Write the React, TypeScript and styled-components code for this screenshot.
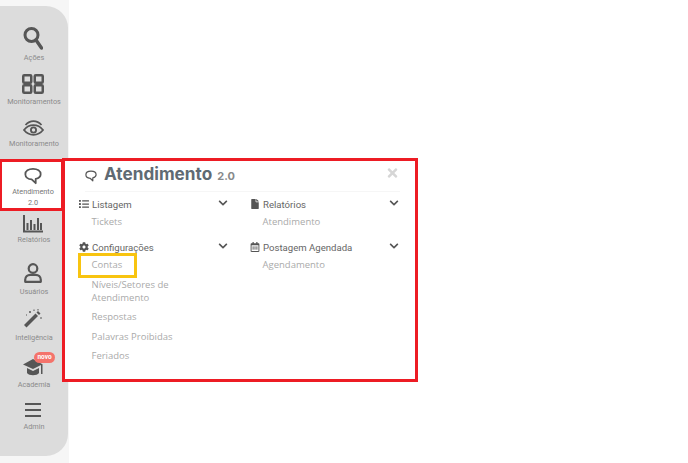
import React from "react";
import styled, {createGlobalStyle} from "styled-components";
import {FaChevronDown, FaCog, FaFile, FaList, FaRegCalendarAlt, FaTimes} from "react-icons/fa";

const GlobalStyle = createGlobalStyle`
  html, body {
    margin: 0;
    padding: 0;
    background: #fff;
    font-family: "Open Sans", "Liberation Sans", sans-serif;
  }
`

const Page = styled.div`
  position: relative;
  width: 688px;
  height: 463px;
  overflow: hidden;
`

const Rail = styled.div`
  width: 69px;
  height: 463px;
  padding-top: 6px;
  box-sizing: border-box;
  background: #f6f6f6;
`

const Sidebar = styled.nav`
  width: 68px;
  height: 450px;
  padding-top: 18px;
  box-sizing: border-box;
  background: #dcdcdc;
  border-radius: 0 22px 22px 0;
  display: flex;
  flex-direction: column;
`

const NavItem = styled.div<{$h: number; $active?: boolean}>`
  position: relative;
  height: ${p => p.$h}px;
  width: ${p => (p.$active ? "64px" : "68px")};
  box-sizing: border-box;
  display: flex;
  flex-direction: column;
  align-items: center;
  color: #8b8b8b;
  ${p => p.$active && `
    background: #fff;
    border: 3px solid #ed1c24;
    border-left-width: 2px;
    padding: 5px 0 0 3px;
    color: #777;
  `}
`

const NavIcon = styled.svg<{$top?: number}>`
  display: block;
  flex: none;
  margin-top: ${p => p.$top ?? 0}px;
  margin-right: 2px;
  color: #565656;
`

const NavLabel = styled.span<{$top?: number}>`
  margin-top: ${p => p.$top ?? 2}px;
  font-family: Roboto, "Liberation Sans", sans-serif;
  font-size: 7.3px;
  line-height: 11px;
  text-align: center;
  white-space: nowrap;
`

const NewBadge = styled.span`
  position: absolute;
  top: -2px;
  left: 34px;
  width: 21px;
  height: 11px;
  border-radius: 6px;
  background: #f4736b;
  color: #fff;
  font-family: Roboto, "Liberation Sans", sans-serif;
  font-size: 6.5px;
  font-weight: 700;
  line-height: 10px;
  text-align: center;
`

const Panel = styled.section`
  position: absolute;
  left: 62px;
  top: 158px;
  width: 356px;
  height: 224px;
  box-sizing: border-box;
  border: 3px solid #ed1c24;
  background: #fff;
  padding: 0 15px 0 14px;
`

const TitleRow = styled.header`
  display: flex;
  align-items: center;
  height: 31px;
  box-sizing: border-box;
  padding-bottom: 4px;
  margin-left: 6px;
  border-bottom: 1px solid #f6f6f6;
  color: #5f6a73;
`

const TitleIcon = styled.span`
  display: block;
  margin-top: 4px;
  margin-right: 7px;
  height: 12px;
`

const Title = styled.h1`
  margin: 0;
  font-family: Inter, "Liberation Sans", sans-serif;
  font-size: 17.2px;
  font-weight: 700;
  line-height: 24px;
`

const Version = styled.span`
  margin: 3px 0 0 5px;
  font-family: Inter, "Liberation Sans", sans-serif;
  font-size: 11px;
  font-weight: 700;
  color: #87898b;
`

const CloseIcon = styled(FaTimes)`
  position: absolute;
  top: 5px;
  right: 16px;
  width: 13px;
  height: 14px;
  color: #d6d6d6;
`

const Columns = styled.div`
  display: grid;
  grid-template-columns: 150px 150px;
  column-gap: 21px;
  padding-top: 4px;
`

const Column = styled.div`
  display: flex;
  flex-direction: column;
`

const Section = styled.div`
  margin-bottom: 7.5px;
`

const SectionHead = styled.div`
  display: flex;
  align-items: center;
  height: 16px;
  color: #666;
  font-family: Roboto, "Liberation Sans", sans-serif;
  font-size: 9.6px;

  svg:first-child {
    width: 10px;
    height: 10px;
    margin-right: 3px;
    color: #555;
  }
`

const Chevron = styled(FaChevronDown)`
  width: 10px;
  height: 10px;
  margin: -2px 1px 0 auto;
  color: #555;
`

const SubList = styled.ul`
  list-style: none;
  margin: 0;
  padding: 0 0 0 12.5px;
  max-width: 100px;
`

const SubItem = styled.li`
  padding: 3px 0 3.5px;
  color: #aaa;
  font-size: 9.5px;
  line-height: 13px;
`

const Highlight = styled.div`
  position: absolute;
  left: 78px;
  top: 253px;
  width: 59px;
  height: 25px;
  box-sizing: border-box;
  border: 3px solid #f8c410;
`

const BubbleSvg = styled.svg`
  display: block;
  color: #565656;
`

const BubbleIcon = ({size = 20}: {size?: number}) => (
    <BubbleSvg width={size} height={size} viewBox="0 0 20 20" fill="none" stroke="currentColor" strokeWidth="2" strokeLinejoin="round">
        <path d="M10 2C5 2 1.500 4.500 1.500 8c0 3.200 3 5.500 7 5.800L13 18v-4.800c3.400-.8 5.500-2.800 5.500-5.200C18.500 4.500 15 2 10 2z" />
    </BubbleSvg>
)

export default function App() {
    return (
        <Page>
            <GlobalStyle />
            <Rail>
                <Sidebar>
                    <NavItem $h={47}>
                        <NavIcon width="20" height="24" viewBox="0 0 20 24" fill="none" stroke="currentColor" strokeWidth="3" $top={2}>
                            <circle cx="8.500" cy="9" r="6.500" />
                            <path d="M13 14l5.500 8" strokeLinecap="round" strokeWidth="3.400" />
                        </NavIcon>
                        <NavLabel $top={2}>Ações</NavLabel>
                    </NavItem>
                    <NavItem $h={46}>
                        <NavIcon width="22" height="20" viewBox="0 0 22 20" fill="none" stroke="currentColor" strokeWidth="2.500" $top={3}>
                            <rect x="1.250" y="1.250" width="8" height="7.500" rx="1" />
                            <rect x="12.750" y="1.250" width="8" height="7.500" rx="1" />
                            <rect x="1.250" y="11.250" width="8" height="7.500" rx="1" />
                            <rect x="12.750" y="11.250" width="8" height="7.500" rx="1" />
                        </NavIcon>
                        <NavLabel $top={2}>Monitoramentos</NavLabel>
                    </NavItem>
                    <NavItem $h={42}>
                        <NavIcon width="21" height="16" viewBox="0 0 21 16" fill="none" stroke="currentColor" strokeWidth="1.800" $top={3}>
                            <path d="M1 10c2.500-3.200 5.700-4.800 9.500-4.800S17.500 6.800 20 10c-2.500 3.200-5.700 4.800-9.500 4.800S3.500 13.200 1 10z" />
                            <circle cx="10.500" cy="10" r="2.600" />
                            <path d="M2.500 5C4.800 2.500 7.500 1.200 10.500 1.200S16.200 2.500 18.500 5" />
                        </NavIcon>
                        <NavLabel $top={2}>Monitoramento</NavLabel>
                    </NavItem>
                    <NavItem $h={52} $active>
                        <BubbleIcon size={18} />
                        <NavLabel $top={1}>Atendimento<br />2.0</NavLabel>
                    </NavItem>
                    <NavItem $h={50}>
                        <NavIcon width="20" height="18" viewBox="0 0 20 18" fill="none" stroke="currentColor" strokeWidth="1.800" $top={4}>
                            <path d="M1 0v16.500h19" strokeWidth="2" />
                            <path d="M4.500 15V8M8 15V5M11.500 15V9M15 15V3M18 15V8" strokeWidth="2" />
                        </NavIcon>
                        <NavLabel $top={1}>Relatórios</NavLabel>
                    </NavItem>
                    <NavItem $h={46}>
                        <NavIcon width="18" height="20" viewBox="0 0 18 20" fill="none" stroke="currentColor" strokeWidth="2.200" $top={2}>
                            <circle cx="9" cy="5.500" r="4.300" />
                            <path d="M1.200 18.800v-2c0-3 2.500-5 5-5h5.600c2.500 0 5 2 5 5v2z" strokeLinejoin="round" />
                        </NavIcon>
                        <NavLabel $top={3}>Usuários</NavLabel>
                    </NavItem>
                    <NavItem $h={47}>
                        <NavIcon width="20" height="20" viewBox="0 0 20 20" $top={1}>
                            <path d="M1 17L12.500 5.500l2.500 2.500L3.500 19.500z" fill="currentColor" />
                            <path d="M13.500 4.500L15 3l2.500 2.500L16 7z" fill="currentColor" />
                            <path d="M6 4h2M7 3v2M15 1v1.500M11 1.500v1.500M18 9v2M3 7h1" stroke="currentColor" strokeWidth="1" />
                        </NavIcon>
                        <NavLabel $top={4}>Inteligência</NavLabel>
                    </NavItem>
                    <NavItem $h={47}>
                        <NewBadge>novo</NewBadge>
                        <NavIcon width="21" height="20" viewBox="0 0 21 20" $top={4}>
                            <path d="M10 1L0 6.500 10 11l8-4v9h1.500V6.200z" fill="currentColor" />
                            <path d="M4 10v5c2 3 10 3 12 0v-5l-6 3z" fill="currentColor" />
                        </NavIcon>
                        <NavLabel $top={1}>Academia</NavLabel>
                    </NavItem>
                    <NavItem $h={40}>
                        <NavIcon width="18" height="16" viewBox="0 0 18 16" stroke="currentColor" strokeWidth="2" $top={1}>
                            <path d="M1 2h16M1 8h16M1 14h16" />
                        </NavIcon>
                        <NavLabel $top={3}>Admin</NavLabel>
                    </NavItem>
                </Sidebar>
            </Rail>
            <Panel>
                <TitleRow>
                    <TitleIcon>
                        <BubbleIcon size={12} />
                    </TitleIcon>
                    <Title>Atendimento</Title>
                    <Version>2.0</Version>
                </TitleRow>
                <CloseIcon />
                <Columns>
                    <Column>
                        <Section>
                            <SectionHead><FaList />Listagem<Chevron /></SectionHead>
                            <SubList>
                                <SubItem>Tickets</SubItem>
                            </SubList>
                        </Section>
                        <Section>
                            <SectionHead><FaCog />Configurações<Chevron /></SectionHead>
                            <SubList>
                                <SubItem>Contas</SubItem>
                                <SubItem>Níveis/Setores de Atendimento</SubItem>
                                <SubItem>Respostas</SubItem>
                                <SubItem>Palavras Proibidas</SubItem>
                                <SubItem>Feriados</SubItem>
                            </SubList>
                        </Section>
                    </Column>
                    <Column>
                        <Section>
                            <SectionHead><FaFile />Relatórios<Chevron /></SectionHead>
                            <SubList>
                                <SubItem>Atendimento</SubItem>
                            </SubList>
                        </Section>
                        <Section>
                            <SectionHead><FaRegCalendarAlt />Postagem Agendada<Chevron /></SectionHead>
                            <SubList>
                                <SubItem>Agendamento</SubItem>
                            </SubList>
                        </Section>
                    </Column>
                </Columns>
            </Panel>
            <Highlight />
        </Page>
    )
}
